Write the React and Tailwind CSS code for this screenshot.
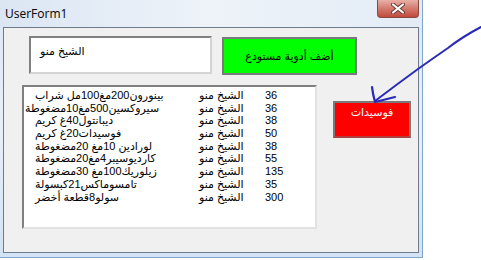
import React from "react";

const rows = [
  ["بينورون200مغ100مل شراب", "36", ""],
  ["سيروكسين500مغ10مضغوطة", "36", "-ml-[10px]"],
  ["ديبانتول40غ كريم", "38", ""],
  ["فوسيدات20غ كريم", "50", ""],
  ["لورادين 10مغ 20مضغوطة", "38", ""],
  ["كارديوسيبر4مغ20مضغوطة", "55", ""],
  ["زيلوريك100مغ 30مضغوطة", "135", ""],
  ["تامسوماكس21كبسولة", "35", ""],
  ["سولو8قطعة أخضر", "300", ""],
];

const F = { fontFamily: '"Liberation Sans", "DejaVu Sans", sans-serif' };

export default function App() {
  return (
    <div className="relative w-[481px] h-[260px] bg-white overflow-hidden" style={F}>
      <div className="w-[423px] h-[258px] flex flex-col bg-gradient-to-b from-[#dce7f4] via-[#e8eff8] to-[#d3e3f3] border-r border-b border-[#7fa6cc]">
        <div className="h-[27px] flex justify-between bg-gradient-to-r from-[#dbe6f3] via-[#eef3f9] to-[#e3ecf6]">
          <div className="pl-[5px] pt-[6px] text-[12px] text-black leading-[16px]" style={{ fontFamily: '"Open Sans", "DejaVu Sans", sans-serif' }}>
            UserForm1
          </div>
          <div className="mr-[3px] w-[42px] h-[18px] rounded-b-[4px] border border-t-0 border-[#8a4a42] bg-gradient-to-b from-[#e8b0a6] via-[#d27a6e] to-[#c24a3c] flex items-center justify-center">
            <svg width="14" height="11" viewBox="0 0 14 11">
              <path d="M2 1.5 L12 9.5 M12 1.5 L2 9.5" stroke="#6a3a34" strokeWidth="4" strokeLinecap="round" />
              <path d="M2 1.5 L12 9.5 M12 1.5 L2 9.5" stroke="#ffffff" strokeWidth="2.2" strokeLinecap="round" />
            </svg>
          </div>
        </div>
        <div className="flex-1 ml-[3px] w-[416px] mb-[4px] border border-[#6d7b8a] bg-[#f0f0f0] pl-[18px] pt-[8px] flex flex-col">
          <div className="flex ml-[7px] gap-[10px]">
            <div className="w-[183px] h-[38px] bg-white border-2 border-t-[#808080] border-l-[#808080] border-b-[#d4d4d4] border-r-[#d4d4d4] pl-[9px] pt-0">
              <span className="text-[11px] leading-[14px] text-black">الشيخ منو</span>
            </div>
            <div className="mt-[1px] w-[135px] h-[38px] bg-[#00ff00] border-2 border-[#7a7a7a] flex items-center justify-center">
              <span className="text-[11px] leading-[14px] text-black">أضف أدوية مستودع</span>
            </div>
          </div>
          <div className="flex mt-[10px] gap-[16px]">
            <div className="w-[295px] h-[144px] bg-white border-2 border-t-[#808080] border-l-[#808080] border-b-[#e2e2e2] border-r-[#e2e2e2] pt-[2px] text-[11px] text-black">
              {rows.map(([name, qty, cls], i) => (
                <div key={i} className="flex h-[12.7px] leading-[12.7px] whitespace-nowrap">
                  <div className="w-[175px] pl-[11px]">
                    <div className={cls}>{name}</div>
                  </div>
                  <div className="w-[66px]">الشيخ منو</div>
                  <div className="text-[11px]">{qty}</div>
                </div>
              ))}
            </div>
            <div className="mt-[16px] w-[78px] h-[37px] bg-[#ff0000] border-2 border-[#7a7a7a] border-b-[#b04040] flex justify-center pt-[2px]">
              <span className="text-[11px] leading-[14px] text-white">فوسيدات</span>
            </div>
          </div>
        </div>
      </div>
      <svg className="absolute left-0 top-0 pointer-events-none" width="481" height="260" viewBox="0 0 481 260">
        <path d="M481 27 Q 462 37 448 48 Q 432 59 418 69 Q 396 85 375 101" stroke="#2a2ab8" strokeWidth="2" fill="none" strokeLinecap="round" />
        <path d="M372 87 Q 373 95 375 102 L 395 97" stroke="#2a2ab8" strokeWidth="2.2" fill="none" strokeLinecap="round" strokeLinejoin="round" />
      </svg>
    </div>
  );
}
